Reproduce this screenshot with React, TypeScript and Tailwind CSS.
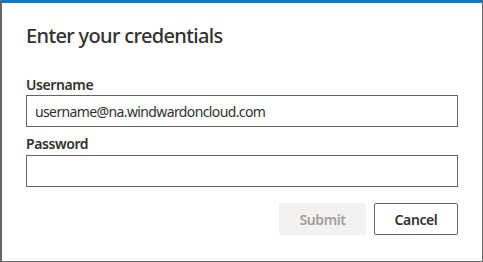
import React from "react";

export default function App() {
  const font = { fontFamily: '"Noto Sans", "Open Sans", sans-serif' };
  return (
    <div
      className="w-[483px] h-[262px] bg-white border-l-2 border-r border-b border-[#666666] flex flex-col text-[#323130]"
      style={font}
    >
      <div className="h-[3px] bg-[#0078d4] shrink-0" />
      <div className="px-6 flex flex-col">
        <h1 className="mt-[19px] text-[20px] leading-[28px] font-[520] tracking-[-0.65px]">Enter your credentials</h1>
        <label className="mt-[25px] text-[14px] leading-[20px] font-[560] tracking-[-0.4px]">Username</label>
        <div className="h-[32px] border border-[#666666] flex items-center px-2 text-[14px] tracking-[-0.62px]">
          username@na.windwardoncloud.com
        </div>
        <label className="mt-[6px] text-[14px] leading-[22px] font-[560] tracking-[-0.4px]">Password</label>
        <div className="h-[32px] border border-[#666666]" />
        <div className="mt-[16px] flex justify-end gap-2">
          <button className="w-[87px] h-[32px] bg-[#f3f2f1] text-[#a19f9d] text-[14px] font-[560] tracking-[-0.4px] rounded-[2px]">
            Submit
          </button>
          <button className="w-[84px] h-[32px] border border-[#666666] text-[#323130] text-[14px] font-[560] tracking-[-0.4px] rounded-[2px]">
            Cancel
          </button>
        </div>
      </div>
    </div>
  );
}
